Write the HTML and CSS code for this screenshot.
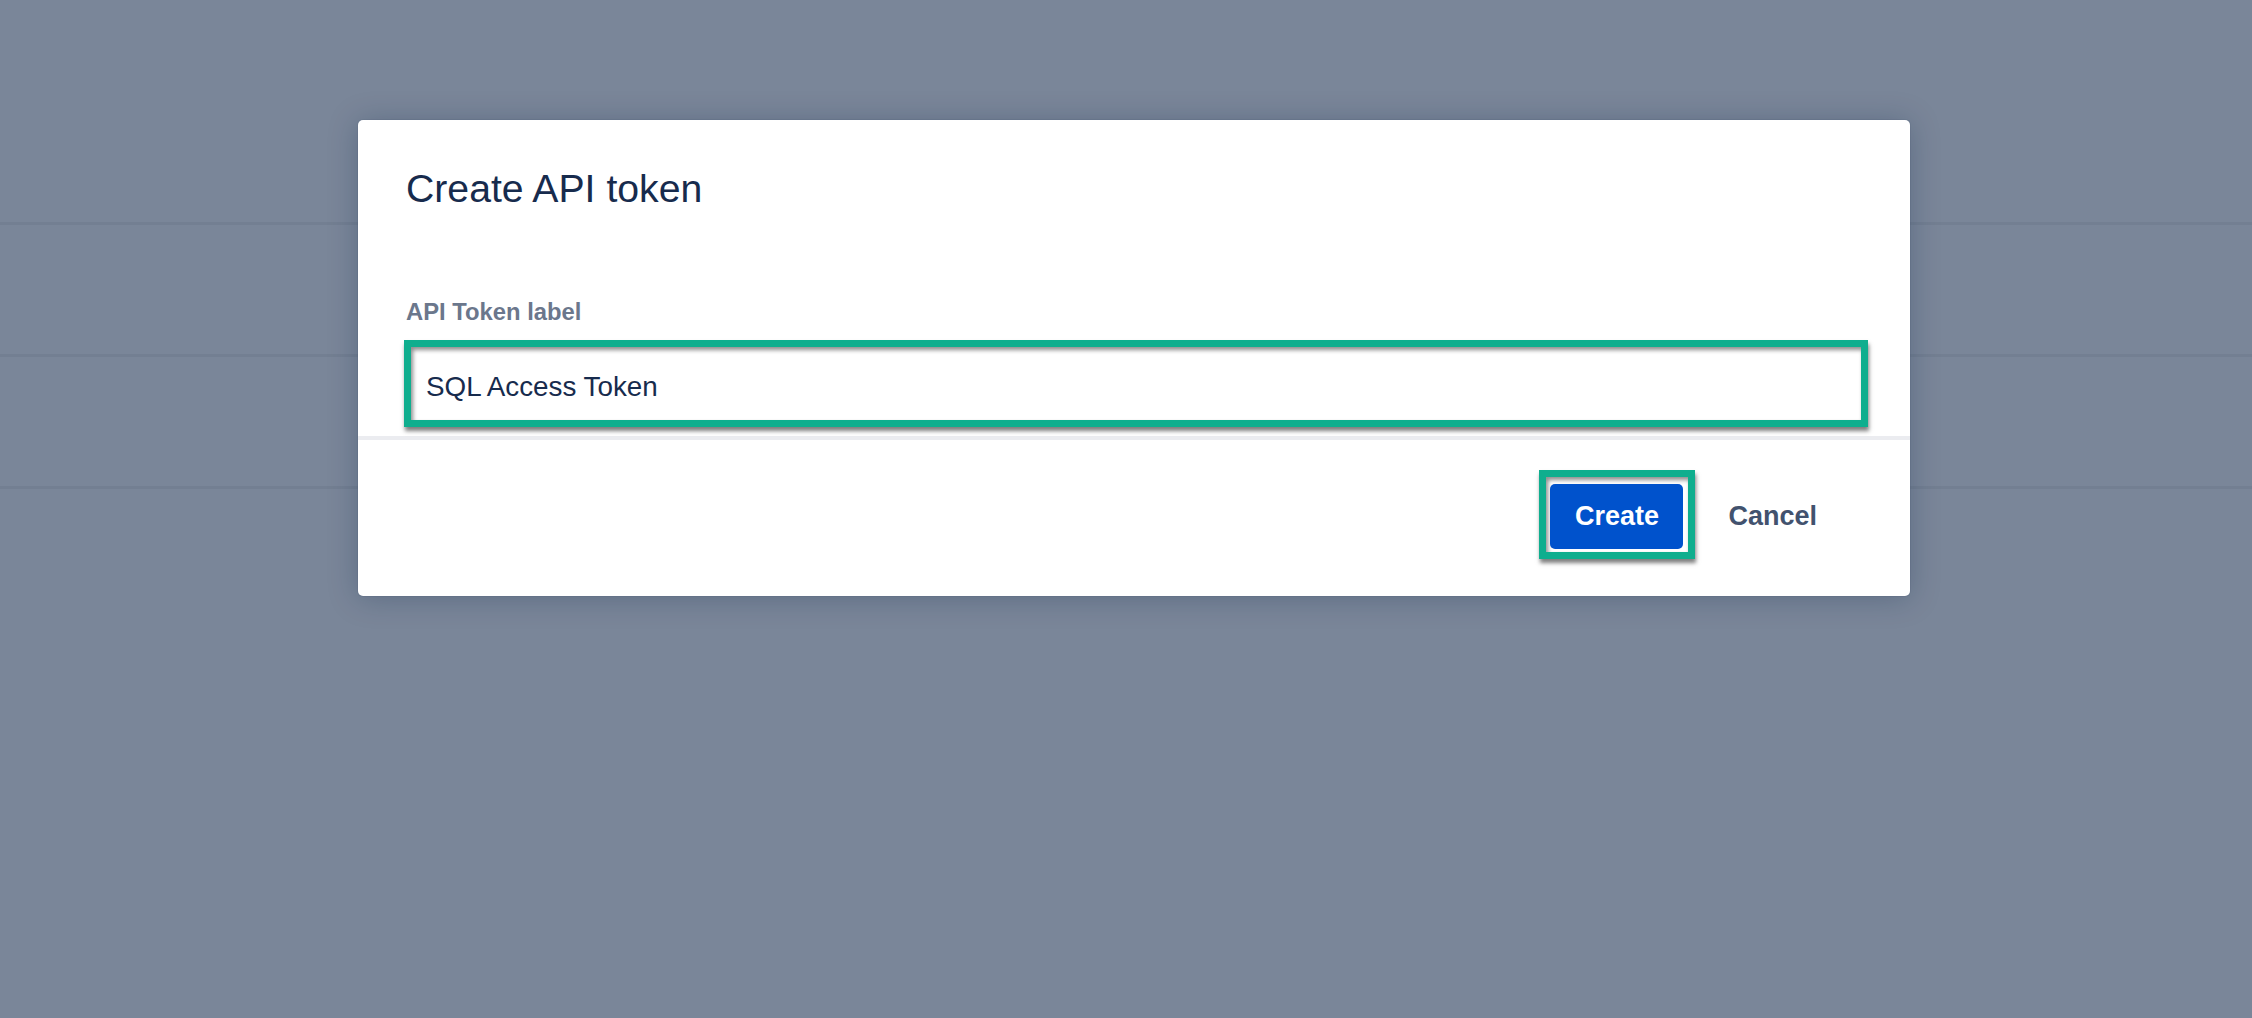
FILE: index.html
```html
<!DOCTYPE html>
<html lang="en">
<head>
<meta charset="utf-8">
<title>Create API token</title>
<link rel="stylesheet" href="styles.css">
</head>
<body>
<div class="page">
  <div class="row row-first"></div>
  <div class="row"></div>
  <div class="row"></div>
</div>
<div class="blanket">
  <div class="modal" role="dialog">
    <div class="modal-body">
      <h1 class="modal-title">Create API token</h1>
      <label class="field-label" for="token">API Token label</label>
      <input class="field-input" id="token" type="text" value="SQL Access Token">
    </div>
    <div class="modal-footer">
      <div class="highlight">
        <button class="btn btn-primary" type="button">Create</button>
      </div>
      <button class="btn btn-subtle" type="button">Cancel</button>
    </div>
  </div>
</div>
</body>
</html>
```

FILE: styles.css
```css
html, body {
  margin: 0;
  padding: 0;
}

body {
  width: 2252px;
  height: 1018px;
  overflow: hidden;
  background: rgb(122, 134, 153);
  font-family: "Liberation Sans", Arial, Helvetica, sans-serif;
  position: relative;
}

.page {
  display: flex;
  flex-direction: column;
}

.row {
  height: 129px;
  border-bottom: 3px solid rgb(115, 127, 146);
}

.row-first {
  height: 222px;
}

.blanket {
  position: absolute;
  inset: 0;
}

.modal {
  position: absolute;
  left: 358px;
  top: 120px;
  width: 1552px;
  height: 476px;
  background: #ffffff;
  border-radius: 5px;
  box-shadow: 0 0 0 1px rgba(9, 30, 66, 0.06), 0 2px 30px rgba(9, 30, 66, 0.26);
  display: flex;
  flex-direction: column;
  overflow: hidden;
}

.modal-body {
  padding: 46px 42px 9px 48px;
  display: flex;
  flex-direction: column;
  border-bottom: 4px solid #ebecf0;
}

.modal-title {
  margin: 0;
  font-size: 39.2px;
  line-height: 46px;
  font-weight: 400;
  color: #172b4d;
}

.field-label {
  margin-top: 86px;
  font-size: 23.8px;
  line-height: 28px;
  font-weight: 700;
  color: #6b778c;
}

.field-input {
  display: block;
  box-sizing: border-box;
  margin: 14px 0 0 -2px;
  width: calc(100% + 2px);
  height: 87px;
  padding: 6px 15px 0;
  border: 7px solid #0fae8e;
  border-radius: 0;
  background: #ffffff;
  font-family: inherit;
  font-size: 27.8px;
  color: #172b4d;
  outline: none;
  box-shadow: 1px 4px 4px rgba(0, 0, 0, 0.5), inset 2px 3px 4px rgba(0, 0, 0, 0.45);
}

.modal-footer {
  flex: 1;
  display: flex;
  justify-content: flex-end;
  align-items: flex-start;
  padding: 30px 76px 0 0;
  gap: 16px;
}

.highlight {
  border: 7px solid #0fae8e;
  padding: 7px 5px 3px 4px;
  display: flex;
  box-shadow: 1px 4px 4px rgba(0, 0, 0, 0.5), inset 2px 3px 4px rgba(0, 0, 0, 0.45);
}

.btn {
  font-family: inherit;
  font-size: 27px;
  font-weight: 700;
  border: none;
  cursor: pointer;
  margin: 0;
}

.btn-primary {
  width: 133px;
  height: 65px;
  line-height: 65px;
  padding: 0;
  border-radius: 5px;
  background: #0052cc;
  color: #ffffff;
}

.btn-subtle {
  height: 90px;
  line-height: 87px;
  padding: 3px 17px 0;
  background: transparent;
  color: #42526e;
}
```
